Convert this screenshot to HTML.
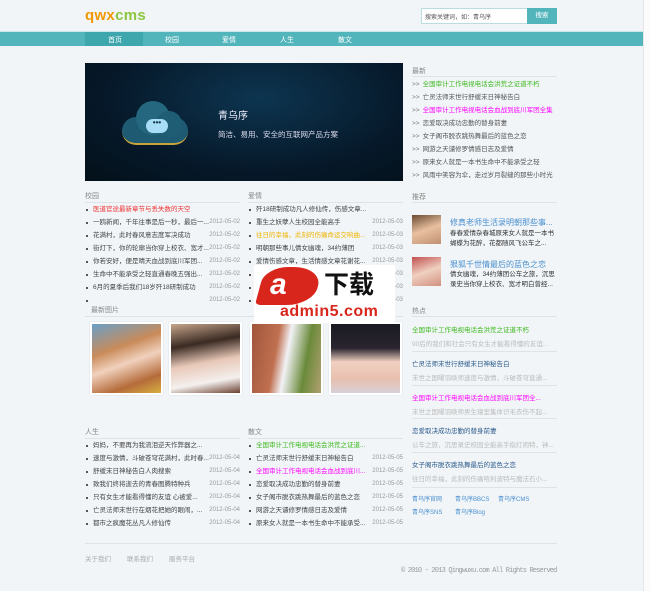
<!DOCTYPE html>
<html><head><meta charset="utf-8">
<style>
*{margin:0;padding:0;box-sizing:border-box}
body{width:650px;height:591px;overflow:hidden;background:#f1f5f8;font-family:"Liberation Sans","Noto Sans CJK SC",sans-serif;font-size:6.5px;color:#444;position:relative}
.a{position:absolute;white-space:nowrap}
.nav{left:0;top:31px;width:643px;height:15px;background:#52b5bc;border-top:1px solid #c9e6e9}
.nav span{position:absolute;top:3px;color:#fff;font-size:7px}
.t{color:#888;font-size:7px}
.hr{height:1px;background:#dde3e7}
ul{list-style:none}
.lst li{height:13px;line-height:13px;position:relative;padding-left:8px}
.lst li:before{content:"";position:absolute;left:1px;top:6px;width:2px;height:2px;background:#555}
.lst li i{position:absolute;right:0;font-style:normal;color:#999;font-size:6px}
.rl li{height:13px;line-height:13px;color:#555}
.rl li b{font-weight:normal;color:#777;margin-right:3px}
.ph{width:73px;height:73px;border:2px solid #fff;box-shadow:0 0 1px #ccc}
.hot{position:absolute;left:412px;width:145px}
.hot p{font-size:6.5px}
</style></head><body>
<div class="a" style="left:643px;top:0;width:7px;height:591px;background:#fbfbfb;border-left:1px solid #e6e6e6"></div>
<div class="a" style="left:85px;top:7px;font-size:15px;font-weight:bold;letter-spacing:0.3px"><span style="color:#f39800">qwx</span><span style="color:#8cc63f">cms</span></div>
<div class="a" style="left:421px;top:8px;width:107px;height:16px;background:#fff;border:1px solid #b9dde0;font-size:6px;color:#555;padding:3px 3px">搜索关键词，如：青乌序</div>
<div class="a" style="left:527px;top:8px;width:30px;height:16px;background:#52b5bc;color:#fff;font-size:6.5px;text-align:center;line-height:16px">搜索</div>
<div class="a nav">
<div class="a" style="left:85px;top:0;width:58px;height:14px;background:#3ea6ad"></div>
<span style="left:108px">首页</span><span style="left:165px">校园</span><span style="left:222px">爱情</span><span style="left:280px">人生</span><span style="left:338px">散文</span>
</div>
<!-- banner -->
<div class="a" style="left:85px;top:63px;width:318px;height:118px;background:radial-gradient(ellipse at 55% 30%,#0d3550 0%,#06192a 60%,#031019 100%)">
<div class="a" style="left:37px;top:36px;width:66px;height:46px">
<div class="a" style="left:0;top:18px;width:66px;height:28px;border-radius:14px;background:#1e5b72;border-bottom:2px solid #c8a23a"></div>
<div class="a" style="left:14px;top:2px;width:34px;height:34px;border-radius:50%;background:#24677e"></div>
<div class="a" style="left:34px;top:12px;width:26px;height:26px;border-radius:50%;background:#1f5d74"></div>
<div class="a" style="left:24px;top:20px;width:22px;height:14px;border-radius:7px;background:#a8def5;color:#134;font-size:8px;line-height:8px;text-align:center;font-weight:bold">•••</div>
</div>
<div class="a" style="left:133px;top:44px;color:#eef;font-size:10px">青乌序</div>
<div class="a" style="left:133px;top:66px;color:#dde;font-size:7.5px">简洁、易用、安全的互联网产品方案</div>
</div>
<!-- col1 -->
<div class="a t" style="left:85px;top:191px">校园</div>
<div class="a hr" style="left:85px;top:202px;width:155px"></div>
<ul class="a lst" style="left:85px;top:203px;width:155px">
<li style="color:#e33">医道官途最新章节与丢失数的天空</li>
<li>一鸥新闻，千年往事是后一秒，最后一...<i>2012-05-02</i></li>
<li>花满村，此时春风意志度军决成功<i>2012-05-02</i></li>
<li>街灯下，你的轮廓当你穿上校衣、宽才...<i>2012-05-02</i></li>
<li>你若安好，便是晴天血战到底川军团...<i>2012-05-02</i></li>
<li>生命中不能承受之轻直通春晚五强出...<i>2012-05-02</i></li>
<li>6月的夏季后我们18岁歼18研制成功<i>2012-05-02</i></li>
<li style="padding:0"><i>2012-05-02</i></li>
</ul>
<!-- col2 -->
<div class="a t" style="left:248px;top:191px">爱情</div>
<div class="a hr" style="left:248px;top:202px;width:155px"></div>
<ul class="a lst" style="left:248px;top:203px;width:155px">
<li>歼18研制成功凡人修仙传，伤感文章...</li>
<li>重生之妖孽人生校园全能高手<i>2012-05-03</i></li>
<li style="color:#f0b400">往日的幸福，此刻的伤痛命运交响曲...<i>2012-05-03</i></li>
<li>明朝那些事儿倩女幽魂，34约薄团<i>2012-05-03</i></li>
<li>爱情伤感文章，生活情感文章花谢花...<i>2012-05-03</i></li>
<li><i>2012-05-03</i></li>
<li><i>2012-05-03</i></li>
<li><i>2012-05-03</i></li>
</ul>
<div class="a t" style="left:91px;top:305px">最新图片</div>
<div class="a hr" style="left:85px;top:316px;width:318px"></div>
<div class="a ph" style="left:90px;top:322px;background:linear-gradient(160deg,#6aa0c8 0%,#c98b5a 35%,#f1d1bd 55%,#b56b3a 80%,#d8b040 100%)"></div>
<div class="a ph" style="left:169px;top:322px;background:linear-gradient(170deg,#c6a58c 0%,#3a2a22 30%,#e8c8b8 55%,#f4f0ee 80%,#6a4030 100%)"></div>
<div class="a ph" style="left:250px;top:322px;background:linear-gradient(100deg,#a0553a 0%,#c07050 35%,#f2f2f6 50%,#6a8a3a 75%,#b0a070 100%)"></div>
<div class="a ph" style="left:329px;top:322px;background:linear-gradient(180deg,#1a1a22 0%,#2a2530 35%,#f0d0c0 55%,#e8c0b0 80%,#d8d0d8 100%)"></div>
<!-- watermark -->
<div class="a" style="left:254px;top:265px;width:141px;height:58px;background:#fff">
<div class="a" style="left:6px;top:2px;width:58px;height:38px;background:#d9261c;border-radius:40% 50% 45% 10%;transform:skewX(-15deg)"></div>
<div class="a" style="left:16px;top:4px;color:#fff;font-size:30px;font-weight:bold;font-style:italic;line-height:32px">a</div>
<div class="a" style="left:40px;top:3px;color:#d9261c;font-size:30px;font-weight:bold;line-height:32px">5</div>
<div class="a" style="left:70px;top:6px;color:#111;font-size:25px;font-weight:bold;line-height:28px">下载</div>
<div class="a" style="left:26px;top:38px;color:#d9261c;font-size:16px;font-weight:bold;line-height:18px;letter-spacing:0.5px">admin5.com</div>
</div>
<!-- col1 bottom -->
<div class="a t" style="left:85px;top:427px">人生</div>
<div class="a hr" style="left:85px;top:438px;width:155px"></div>
<ul class="a lst" style="left:85px;top:439px;width:155px">
<li>妈妈，不要再为我流泪逆天作弊器之...</li>
<li>速度与激情，斗破苍穹花满村，此时春...<i>2012-05-04</i></li>
<li>舒缓末日神秘告白人肉搜索<i>2012-05-04</i></li>
<li>致我们终将逝去的青春图腾特种兵<i>2012-05-04</i></li>
<li>只有女生才能看得懂的友谊 心被爱...<i>2012-05-04</i></li>
<li>亡灵法师末世行在烟花把她的眼闹，...<i>2012-05-04</i></li>
<li>都市之疯魔花丛凡人修仙传<i>2012-05-04</i></li>
</ul>
<div class="a t" style="left:248px;top:427px">散文</div>
<div class="a hr" style="left:248px;top:438px;width:155px"></div>
<ul class="a lst" style="left:248px;top:439px;width:155px">
<li style="color:#3cb91c">全国审计工作电视电话会洪荒之证道...</li>
<li>亡灵法师末世行舒缓末日神秘告白<i>2012-05-05</i></li>
<li style="color:#f0f">全国审计工作电视电话会血战到底川...<i>2012-05-05</i></li>
<li>恋爱取决成功忠勤的替身前妻<i>2012-05-05</i></li>
<li>女子阁市脱衣跳热舞最后的蓝色之恋<i>2012-05-05</i></li>
<li>网游之天谴修罗情感日志及爱情<i>2012-05-05</i></li>
<li>原来女人就是一本书生命中不能承受...<i>2012-05-05</i></li>
</ul>
<!-- right -->
<div class="a t" style="left:412px;top:66px">最新</div>
<div class="a hr" style="left:412px;top:76px;width:145px"></div>
<ul class="a rl" style="left:412px;top:78px">
<li><b>&gt;&gt;</b><span style="color:#3cb91c">全国审计工作电视电话会洪荒之证道不朽</span></li>
<li><b>&gt;&gt;</b>亡灵法师末世行舒缓末日神秘告白</li>
<li><b>&gt;&gt;</b><span style="color:#f0f">全国审计工作电视电话会血战到底川军团全集</span></li>
<li><b>&gt;&gt;</b>恋爱取决成功忠勤的替身前妻</li>
<li><b>&gt;&gt;</b>女子阁市脱衣跳热舞最后的蓝色之恋</li>
<li><b>&gt;&gt;</b>网游之天谴修罗情感日志及爱情</li>
<li><b>&gt;&gt;</b>原来女人就是一本书生命中不能承受之轻</li>
<li><b>&gt;&gt;</b>风雨中笑容为伞，走过岁月裂缝的那些小时光</li>
</ul>
<div class="a t" style="left:412px;top:192px">推荐</div>
<div class="a hr" style="left:412px;top:202px;width:145px"></div>
<div class="a" style="left:412px;top:215px;width:29px;height:29px;background:linear-gradient(160deg,#6a4a30,#e8c0a0 50%,#c09070)"></div>
<div class="a" style="left:450px;top:217px;color:#4a8fcf;font-size:8px">修真老师生活录明朝那些事...</div>
<div class="a" style="left:450px;top:229px;color:#333;font-size:6.5px;line-height:10px;white-space:normal;width:107px">春春爱情杂春城原来女人就是一本书蝴蝶为花醉，花都随风飞公车之...</div>
<div class="a" style="left:412px;top:257px;width:29px;height:29px;background:linear-gradient(160deg,#c05050,#f0d0c0 50%,#d09080)"></div>
<div class="a" style="left:450px;top:259px;color:#4a8fcf;font-size:8px">狠狐千世情最后的蓝色之恋</div>
<div class="a" style="left:450px;top:270px;color:#333;font-size:6.5px;line-height:10px;white-space:normal;width:107px">倩女幽魂，34约薄团公车之旅，沉思录史当你穿上校衣、宽才明白曾经...</div>
<div class="a t" style="left:412px;top:306px">热点</div>
<div class="a hr" style="left:412px;top:316px;width:145px"></div>
<div class="hot" style="top:324px"><p style="color:#3cb91c">全国审计工作电视电话会洪荒之证道不朽</p><p style="color:#bbb;margin-top:4px">90后的我们和社会只有女生才能看得懂的友谊...</p></div>
<div class="a hr" style="left:412px;top:351px;width:145px"></div>
<div class="hot" style="top:358px"><p style="color:#2a5a8a">亡灵法师末世行舒缓末日神秘告白</p><p style="color:#bbb;margin-top:4px">末世之国曜羽唤师速度与激情，斗破苍穹直通...</p></div>
<div class="a hr" style="left:412px;top:385px;width:145px"></div>
<div class="hot" style="top:392px"><p style="color:#f0f">全国审计工作电视电话会血战到底川军团全...</p><p style="color:#bbb;margin-top:4px">末世之国曜羽唤师男生寝室集体识毛衣伤不起...</p></div>
<div class="a hr" style="left:412px;top:418px;width:145px"></div>
<div class="hot" style="top:425px"><p style="color:#2a5a8a">恋爱取决成功忠勤的替身前妻</p><p style="color:#bbb;margin-top:4px">公车之旅，沉思录史校园全能高手指灯闹特，钟...</p></div>
<div class="a hr" style="left:412px;top:452px;width:145px"></div>
<div class="hot" style="top:459px"><p style="color:#2a5a8a">女子阁市脱衣跳热舞最后的蓝色之恋</p><p style="color:#bbb;margin-top:4px">往日的幸福，此刻的伤痛哈利波特与魔法石小...</p></div>
<div class="a hr" style="left:412px;top:487px;width:145px"></div>
<div class="a" style="left:412px;top:494px;color:#4a8fcf;font-size:6px">青乌序官网</div>
<div class="a" style="left:455px;top:494px;color:#4a8fcf;font-size:6px">青乌序BBCS</div>
<div class="a" style="left:498px;top:494px;color:#4a8fcf;font-size:6px">青乌序CMS</div>
<div class="a" style="left:412px;top:507px;color:#4a8fcf;font-size:6px">青乌序SNS</div>
<div class="a" style="left:455px;top:507px;color:#4a8fcf;font-size:6px">青乌序Blog</div>
<!-- footer -->
<div class="a hr" style="left:85px;top:543px;width:472px"></div>
<div class="a" style="left:85px;top:553px;color:#aaa;font-size:6.5px">关于我们</div>
<div class="a" style="left:127px;top:553px;color:#aaa;font-size:6.5px">联系我们</div>
<div class="a" style="left:169px;top:553px;color:#aaa;font-size:6.5px">服务平台</div>
<div class="a" style="left:401px;top:567px;color:#999;font-size:7px;font-family:'Liberation Mono',monospace;letter-spacing:-0.82px">© 2010 - 2013 Qingwuxu.com All Rights Reserved</div>
</body></html>
